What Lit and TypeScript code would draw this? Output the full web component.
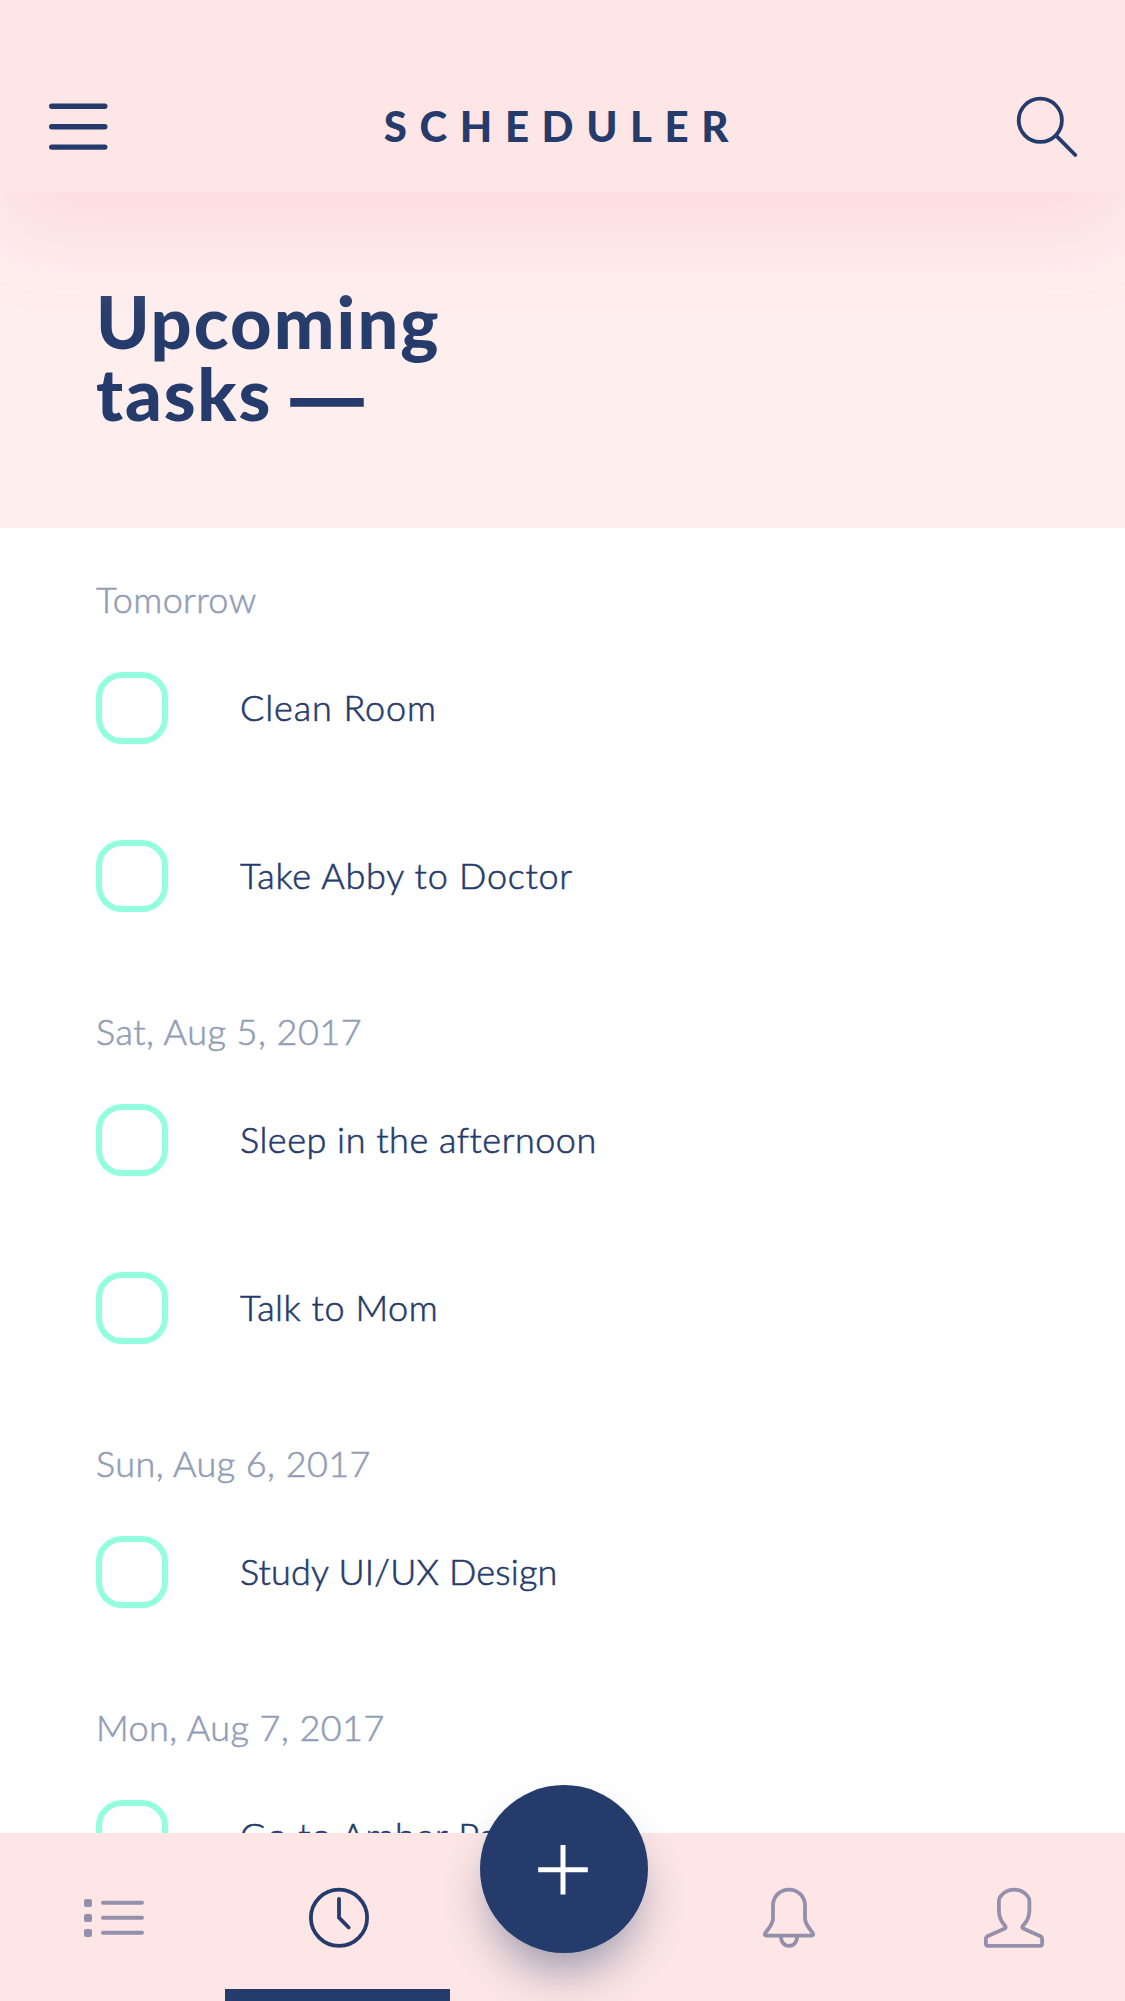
import { LitElement, html, css } from "lit";
import { customElement, property } from "lit/decorators.js";

interface Line {
  text: string;
  /** letter spacing in px */
  tracking: number;
}

interface Day {
  label: Line;
  tasks: Line[];
}

const line = (text: string, tracking: number): Line => ({ text, tracking });

const DAYS: Day[] = [
  {
    label: line("Tomorrow", 0.4),
    tasks: [line("Clean Room", 0.9), line("Take Abby to Doctor", 0.76)],
  },
  {
    label: line("Sat, Aug 5, 2017", 0.5),
    tasks: [line("Sleep in the afternoon", 0.52), line("Talk to Mom", 0.55)],
  },
  {
    label: line("Sun, Aug 6, 2017", 0.43),
    tasks: [line("Study UI/UX Design", 0.18)],
  },
  {
    label: line("Mon, Aug 7, 2017", 0.45),
    tasks: [line("Go to Amber Park", 0.7)],
  },
];

@customElement("task-day")
export class TaskDay extends LitElement {
  @property({ attribute: false }) day!: Day;

  static styles = css`
    :host {
      display: block;
      font-size: 36px;
      font-weight: 300;
      white-space: nowrap;
    }
    .label {
      margin: 0 0 51px;
      padding-top: 1px;
      font-size: inherit;
      font-weight: inherit;
      line-height: 44px;
      color: #929eb6;
      -webkit-text-stroke: 0.6px currentColor;
    }
    .tasks {
      display: flex;
      flex-direction: column;
      gap: 96px;
      margin: 0;
      padding: 0;
      list-style: none;
    }
    .task {
      display: flex;
      align-items: center;
      gap: 72px;
      height: 72px;
    }
    .box {
      box-sizing: border-box;
      flex: none;
      width: 72px;
      height: 72px;
      margin: 0;
      appearance: none;
      border: 6px solid #93ffdf;
      border-radius: 26px;
      background: #fff;
    }
    .name {
      padding-bottom: 2px;
      line-height: 44px;
      color: #253b6b;
      -webkit-text-stroke: 0.6px currentColor;
    }
  `;

  render() {
    const { label, tasks } = this.day;
    return html`
      <h2 class="label" style="letter-spacing:${label.tracking}px">${label.text}</h2>
      <ul class="tasks">
        ${tasks.map(
          (t) => html`<li class="task">
            <input class="box" type="checkbox" aria-label=${t.text} />
            <span class="name" style="letter-spacing:${t.tracking}px">${t.text}</span>
          </li>`
        )}
      </ul>
    `;
  }
}

@customElement("app-root")
export class AppRoot extends LitElement {
  static styles = css`
    :host {
      display: flex;
      flex-direction: column;
      height: 2001px;
      overflow: hidden;
      background: #fff;
      color: #253b6b;
      font-family: Lato, "Open Sans", sans-serif;
    }
    svg {
      display: block;
      fill: none;
      stroke: currentColor;
      stroke-linecap: round;
      stroke-linejoin: round;
    }
    .header {
      position: relative;
      z-index: 1;
      box-sizing: border-box;
      flex: none;
      display: grid;
      grid-template-columns: 1fr auto 1fr;
      align-items: center;
      height: 192px;
      padding: 60px 46px 0 46px;
      background: #fde6e5;
      box-shadow: 0 36px 90px #fdd9dc;
    }
    .title {
      margin: 0;
      padding: 0 0 1px;
      font-size: 42px;
      line-height: 50px;
      font-weight: 900;
      letter-spacing: 12.6px;
    }
    .search {
      justify-self: end;
    }
    .hero {
      box-sizing: border-box;
      flex: none;
      height: 336px;
      padding: 93px 0 0 96px;
      background: #feeeee;
    }
    .heading {
      margin: 0;
      font-size: 72px;
      line-height: 72px;
      font-weight: 900;
      letter-spacing: 2.1px;
    }
    .tight {
      letter-spacing: 1.8px;
    }
    .dash {
      font-family: "Liberation Sans", sans-serif;
      font-weight: 700;
      letter-spacing: 0;
      line-height: 0;
      vertical-align: -1px;
      -webkit-text-stroke: 1.5px currentColor;
    }
    .list {
      flex: 1;
      min-height: 0;
      overflow: hidden;
      display: flex;
      flex-direction: column;
      gap: 96px;
      padding: 48px 96px 0;
    }
    .day {
      flex: none;
    }
    .tabs {
      position: relative;
      flex: none;
      display: grid;
      grid-template-columns: repeat(5, 1fr);
      height: 168px;
      background: #fde6e5;
    }
    .tab {
      box-sizing: border-box;
      display: flex;
      align-items: center;
      justify-content: center;
      padding-top: 2px;
      color: #9490ac;
    }
    .active {
      color: #253b6b;
      padding-top: 14px;
      border-bottom: 12px solid #253b6b;
    }
    .fab {
      position: absolute;
      left: 480px;
      top: -48px;
      display: flex;
      align-items: center;
      justify-content: center;
      width: 168px;
      height: 168px;
      padding: 0;
      border: 0;
      border-radius: 50%;
      background: #253b6b;
      color: #fff;
      box-shadow: 0 28px 46px -10px rgba(37, 59, 107, 0.45);
    }
    .plus {
      stroke-linecap: butt;
    }
  `;

  render() {
    return html`
      <header class="header">
        <svg width="64" height="64" viewBox="46 94 64 64" stroke-width="5.4">
          <path d="M51.7 106.2H104.8M51.7 126.7H104.8M51.7 147.1H104.8" />
        </svg>
        <h1 class="title">SCHEDULER</h1>
        <svg class="search" width="64" height="64" viewBox="1015 94 64 64" stroke-width="3.8">
          <circle cx="1040.3" cy="120.3" r="21.6" />
          <path d="M1056.3 135.8L1075.3 155" />
        </svg>
      </header>

      <section class="hero">
        <h2 class="heading">
          Upcoming<br /><span class="tight">tasks <span class="dash">—</span></span>
        </h2>
      </section>

      <main class="list">
        ${DAYS.map((d) => html`<task-day class="day" .day=${d}></task-day>`)}
      </main>

      <nav class="tabs">
        <div class="tab">
          <svg width="64" height="64" viewBox="81 1886 64 64" stroke-width="4">
            <g fill="currentColor" stroke="none">
              <rect x="84" y="1899" width="8" height="8" rx="2" />
              <rect x="84" y="1914" width="8" height="8" rx="2" />
              <rect x="84" y="1929" width="8" height="8" rx="2" />
            </g>
            <path d="M103 1902.8H142M103 1917.8H142M103 1932.8H142" />
          </svg>
        </div>
        <div class="tab active">
          <svg width="64" height="64" viewBox="306 1886 64 64" stroke-width="3.8">
            <circle cx="339" cy="1917.7" r="28.1" />
            <path d="M339 1899V1917.7L348.7 1927.5" />
          </svg>
        </div>
        <div class="tab"></div>
        <div class="tab">
          <svg width="64" height="64" viewBox="756 1886 64 64" stroke-width="3.8">
            <path
              d="M773 1905.5C773 1896.5 780 1889.6 789 1889.6S805 1896.5 805 1905.5V1918C805 1922.5 807 1925.2 809 1928L812.6 1932.8C813.8 1934.5 813 1935.6 811.5 1935.6H766.5C765 1935.6 764.2 1934.5 765.4 1932.8L769 1928C771 1925.2 773 1922.5 773 1918Z"
            />
            <path d="M781 1936C780.5 1941.5 784 1945.9 789 1945.9S797.5 1941.5 797 1936" />
          </svg>
        </div>
        <div class="tab">
          <svg width="64" height="64" viewBox="981 1886 64 64" stroke-width="3.8">
            <path
              d="M1014 1889.6C1020.5 1889.6 1025 1892.8 1028 1896.6C1029.2 1898.2 1029.4 1899.5 1029.4 1901V1910C1029.4 1917 1027 1921.5 1023.3 1925.3C1021.8 1927 1022 1928 1023.8 1928.8L1040 1936C1041.5 1936.7 1042.1 1937.6 1042.1 1939V1943.5C1042.1 1945.2 1041.5 1945.9 1040 1945.9H988C986.5 1945.9 985.9 1945.2 985.9 1943.5V1939C985.9 1937.6 986.5 1936.7 988 1936L1004.2 1928.8C1006 1928 1006.2 1927 1004.7 1925.3C1001 1921.5 998.9 1917 998.9 1910V1901C998.9 1899.5 999.1 1898.2 1000.3 1896.6C1003.2 1892.8 1007.5 1889.6 1014 1889.6Z"
            />
          </svg>
        </div>
        <button class="fab" aria-label="Add task">
          <svg class="plus" width="64" height="64" viewBox="532 1837 64 64" stroke-width="5">
            <path d="M538.2 1869.8H587.8M563 1845V1894.6" />
          </svg>
        </button>
      </nav>
    `;
  }
}
